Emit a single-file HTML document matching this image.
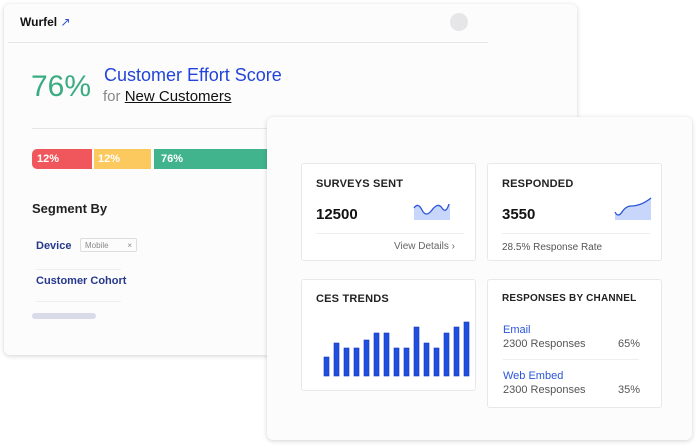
<!DOCTYPE html>
<html><head><style>
*{margin:0;padding:0;box-sizing:border-box}
body{width:700px;height:448px;background:#fff;position:relative;overflow:hidden;font-family:"Liberation Sans",sans-serif}
.a{position:absolute}
.card{position:absolute;background:#fcfcfd;border-radius:6px;box-shadow:0 1px 5px rgba(0,0,0,.18)}
.ic{position:absolute;background:#fff;border:1px solid #e8e8ec;border-radius:3px}
.t{position:absolute;font-size:11px;font-weight:bold;color:#222;letter-spacing:.2px}
.n{position:absolute;font-size:15px;font-weight:bold;color:#111}
</style></head><body>
<div class="card" style="left:4px;top:4px;width:573px;height:351px">
  <div class="a" style="left:16px;top:11px;font-size:12px;font-weight:bold;color:#111">Wurfel <span style="color:#2a4fd6;font-weight:normal">↗</span></div>
  <div class="a" style="left:446px;top:9px;width:18px;height:18px;border-radius:50%;background:#e6e6e8"></div>
  <div class="a" style="left:4px;top:38px;width:480px;height:1px;background:#e6e6ea"></div>
  <div class="a" style="left:27px;top:66px;font-size:30px;color:#3aac82">76%</div>
  <div class="a" style="left:100px;top:61px;font-size:18px;color:#2244d8">Customer Effort Score</div>
  <div class="a" style="left:99px;top:84px;font-size:15px;color:#888">for <span style="color:#111;text-decoration:underline">New Customers</span></div>
  <div class="a" style="left:28px;top:124px;width:240px;height:1px;background:#e6e6ea"></div>
  <div class="a" style="left:28px;top:145px;width:60px;height:20px;background:#f0575c;border-radius:5px 0 0 5px;color:#fff;font-size:11px;font-weight:bold;padding:4px 5px">12%</div>
  <div class="a" style="left:90px;top:145px;width:57px;height:20px;background:#fcc95e;color:#fff;font-size:11px;font-weight:bold;padding:4px 4px">12%</div>
  <div class="a" style="left:150px;top:145px;width:120px;height:20px;background:#41b48d;color:#fff;font-size:11px;font-weight:bold;padding:4px 7px">76%</div>
  <div class="a" style="left:28px;top:197px;font-size:13px;font-weight:bold;color:#222">Segment By</div>
  <div class="a" style="left:32px;top:236px;font-size:11px;font-weight:bold;color:#26388a">Device</div>
  <div class="a" style="left:76px;top:234px;width:57px;height:14px;border:1px solid #ddd;border-radius:2px;font-size:8px;color:#888;padding:2px 4px">Mobile<span style="position:absolute;right:4px">×</span></div>
  <div class="a" style="left:32px;top:265px;width:85px;height:1px;background:#eee"></div>
  <div class="a" style="left:32px;top:271px;font-size:11px;font-weight:bold;color:#26388a">Customer Cohort</div>
  <div class="a" style="left:32px;top:297px;width:85px;height:1px;background:#eee"></div>
  <div class="a" style="left:28px;top:309px;width:64px;height:6px;border-radius:3px;background:#d9dce8"></div>
</div>
<div class="card" style="left:267px;top:117px;width:425px;height:323px"></div>
<div class="ic" style="left:301px;top:163px;width:175px;height:98px">
  <div class="t" style="left:14px;top:14px">SURVEYS SENT</div>
  <div class="n" style="left:14px;top:42px">12500</div>
  <svg class="a" style="left:110px;top:34px" width="40" height="24"><path d="M2 10 Q6 4 10 12 T20 12 T30 10 T36 6 L38 6 L38 22 L2 22Z" fill="#c8d6fb"/><path d="M2 10 Q6 4 10 12 T20 12 T30 10 T37 6" fill="none" stroke="#2a55d8" stroke-width="1.3"/></svg>
  <div class="a" style="left:14px;top:69px;width:148px;height:1px;background:#eee"></div>
  <div class="a" style="left:92px;top:77px;font-size:10px;color:#666">View Details ›</div>
</div>
<div class="ic" style="left:487px;top:163px;width:175px;height:98px">
  <div class="t" style="left:14px;top:14px">RESPONDED</div>
  <div class="n" style="left:14px;top:42px">3550</div>
  <svg class="a" style="left:125px;top:32px" width="40" height="26"><path d="M2 16 Q5 22 9 16 T18 10 T28 8 T38 2 L38 24 L2 24Z" fill="#c8d6fb"/><path d="M2 16 Q5 22 9 16 T18 10 T28 8 T38 2" fill="none" stroke="#2a55d8" stroke-width="1.3"/></svg>
  <div class="a" style="left:14px;top:69px;width:148px;height:1px;background:#eee"></div>
  <div class="a" style="left:14px;top:78px;font-size:10px;color:#555">28.5% Response Rate</div>
</div>
<div class="ic" style="left:301px;top:279px;width:175px;height:112px">
  <div class="t" style="left:14px;top:13px">CES TRENDS</div>
  <svg class="a" style="left:0;top:0" width="175" height="112">
    <g fill="#1f4fe0" stroke="#1638b8" stroke-width=".6">
      <rect x="22" y="77" width="5" height="19"/><rect x="32" y="63" width="5" height="33"/><rect x="42" y="68" width="5" height="28"/><rect x="52" y="68" width="5" height="28"/><rect x="62" y="60" width="5" height="36"/><rect x="72" y="53" width="5" height="43"/><rect x="82" y="53" width="5" height="43"/><rect x="92" y="68" width="5" height="28"/><rect x="102" y="68" width="5" height="28"/><rect x="112" y="47" width="5" height="49"/><rect x="122" y="63" width="5" height="33"/><rect x="132" y="68" width="5" height="28"/><rect x="142" y="53" width="5" height="43"/><rect x="152" y="47" width="5" height="49"/><rect x="162" y="42" width="5" height="54"/>
    </g>
  </svg>
</div>
<div class="ic" style="left:487px;top:279px;width:175px;height:129px">
  <div class="t" style="left:14px;top:13px;font-size:10px">RESPONSES BY CHANNEL</div>
  <div class="a" style="left:15px;top:44px;font-size:11px;color:#2a55d8">Email</div>
  <div class="a" style="left:15px;top:58px;font-size:11px;color:#555">2300 Responses</div>
  <div class="a" style="left:130px;top:58px;font-size:11px;color:#555">65%</div>
  <div class="a" style="left:15px;top:79px;width:136px;height:1px;background:#eee"></div>
  <div class="a" style="left:15px;top:90px;font-size:11px;color:#2a55d8">Web Embed</div>
  <div class="a" style="left:15px;top:104px;font-size:11px;color:#555">2300 Responses</div>
  <div class="a" style="left:130px;top:104px;font-size:11px;color:#555">35%</div>
</div>
</body></html>
